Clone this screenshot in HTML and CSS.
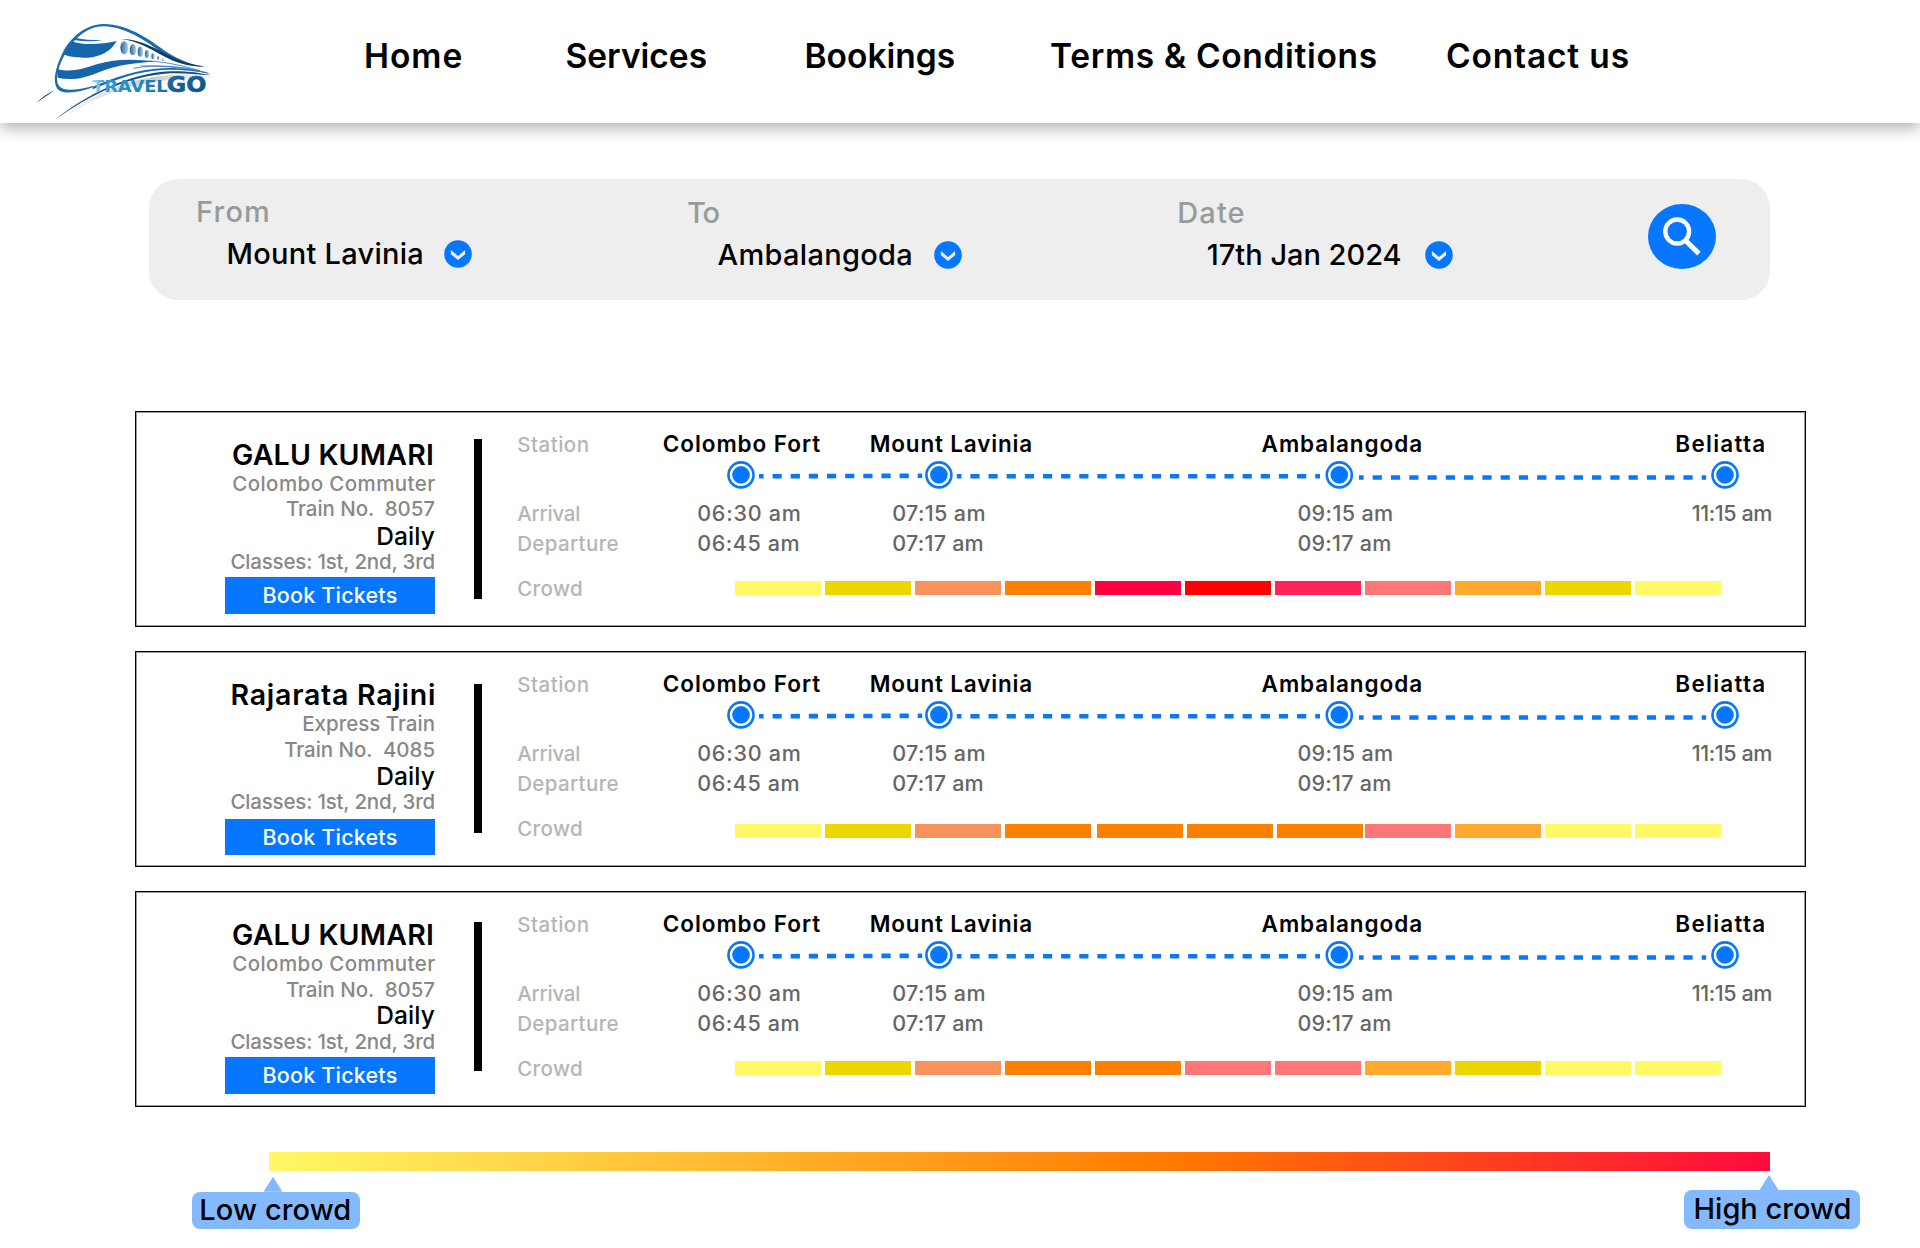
FILE: index.html
```html
<!DOCTYPE html>
<html lang="en">
<head>
<meta charset="utf-8">
<title>TravelGO – Train search</title>
<link rel="stylesheet" href="styles.css">
</head>
<body>
<svg width="0" height="0" class="defs">
  <defs>
    <symbol id="chevron" viewBox="0 0 28 28">
      <circle cx="14" cy="14" r="13.8" fill="#0877ff"/>
      <path d="M6.9 10 14 16 21.1 10V14.300L14 20 6.900 14.300Z" fill="#eee"/>
    </symbol>
    <symbol id="track" viewBox="0 0 1070 32">
      <g fill="none" stroke="#0877ff" stroke-width="4.6" stroke-dasharray="9.2 8.95" stroke-dashoffset="4.6">
        <path d="M59 17.3 222.2 16.8"/>
        <path d="M256.8 17.2H620"/>
        <path d="M659 18.5H1006.2" stroke-dasharray="9.2 9.08"/>
      </g>
      <g fill="#fff" stroke="#0877ff" stroke-width="2.6">
        <circle cx="41" cy="15.9" r="12.5"/><circle cx="238.9" cy="15.9" r="12.5"/><circle cx="639.3" cy="15.9" r="12.5"/><circle cx="1025" cy="15.9" r="12.5"/>
      </g>
      <g fill="#0877ff">
        <circle cx="41" cy="15.9" r="8.8"/><circle cx="238.9" cy="15.9" r="8.8"/><circle cx="639.3" cy="15.9" r="8.8"/><circle cx="1025" cy="15.9" r="8.8"/>
      </g>
    </symbol>
  </defs>
</svg>

<header class="header">
  <svg class="logo" viewBox="0 0 630 330">
    <defs>
      <linearGradient id="word"><stop offset="0" stop-color="#a9dcf5"/><stop offset=".2" stop-color="#2b9bd8"/><stop offset="1" stop-color="#1a6fab"/></linearGradient>
      <linearGradient id="go" x1="0" y1="0" x2="1" y2="1"><stop offset="0" stop-color="#1d6fa8"/><stop offset="1" stop-color="#0f4f7f"/></linearGradient>
      <linearGradient id="win"><stop offset="0" stop-color="#1e62a0"/><stop offset="1" stop-color="#b5d3ea"/></linearGradient>
      <linearGradient id="haze"><stop offset="0" stop-color="#ddd" stop-opacity=".4"/><stop offset=".6" stop-color="#ccc"/><stop offset="1" stop-color="#ddd" stop-opacity=".3"/></linearGradient>
    </defs>
    <path fill="url(#haze)" d="M130 324C220 245 330 206 440 196C500 190 560 196 582 202C520 206 470 206 400 216C300 232 210 270 130 324Z"/>
    <path fill="#1a6cb0" d="M219 232C180 247 128 256 112 236C97 214 106 172 128 128C152 82 196 43 250 42C330 42 400 98 440 126C480 152 520 166 556 170C510 170 470 156 430 131C390 104 325 50 250 49C204 49 166 82 140 124C118 160 102 208 118 229C132 246 176 240 219 228Z"/>
    <path fill="#1565ab" d="M158 95C200 108 250 101 290 93C275 121 245 141 202 143C170 144 145 140 131 133C138 118 146 105 158 95Z"/>
    <path fill="#1a6cb0" d="M168 84C190 89 215 90 246 91C220 96 185 94 162 90Z"/>
    <path fill="#1565ab" d="M112 177C150 188 185 178 230 163C290 145 350 148 408 155C350 157 290 165 240 185C190 207 150 212 113 203Z"/>
    <g fill="url(#win)"><ellipse cx="313" cy="113" rx="12" ry="19"/><ellipse cx="339" cy="119" rx="10" ry="17"/><ellipse cx="361" cy="125" rx="8" ry="15"/><ellipse cx="381" cy="132" rx="6.5" ry="12"/><ellipse cx="399" cy="139" rx="5" ry="9"/><ellipse cx="415" cy="144" rx="3.5" ry="6"/><ellipse cx="429" cy="149" rx="2" ry="4"/></g>
    <path fill="#0e3f68" d="M302 87C350 86 395 108 440 133C480 153 515 166 556 169C515 172 470 160 430 138C385 113 350 92 302 87Z"/>
    <path fill="#1a6cb0" d="M218 230C280 205 350 176 440 174C500 174 540 182 575 192C530 184 480 178 430 180C350 184 290 208 218 238Z"/>
    <g fill="none" stroke="#2b78b8" stroke-width="2.5"><path d="M340 175C400 163 480 166 560 188"/><path d="M362 168C440 166 510 176 565 190"/><path d="M390 153C440 156 490 168 540 182"/></g>
    <path fill="#0f4f7f" d="M106 329C200 252 330 190 450 184C500 183 540 188 572 196C530 193 490 188 450 190C330 197 210 254 106 329Z"/>
    <path fill="#0f4f7f" d="M48 279C66 262 84 250 104 240C86 254 68 266 48 279Z"/>
    <text class="logo-word" x="216" y="247" font-size="46" textLength="227" lengthAdjust="spacingAndGlyphs" fill="url(#word)">TRAVEL</text>
    <text class="logo-word" x="440" y="247" font-size="66" textLength="119" lengthAdjust="spacingAndGlyphs" fill="url(#go)" stroke="#12588c" stroke-width="2">GO</text>
  </svg>
  <nav class="nav">
    <a class="nav-home">Home</a><a>Services</a><a>Bookings</a><a class="nav-terms">Terms &amp; Conditions</a><a class="nav-contact">Contact us</a>
  </nav>
</header>

<main>
  <section class="search">
    <div class="field">
      <div class="field-label label-from">From</div>
      <div class="field-value"><span class="value-from">Mount Lavinia</span><svg class="chevron"><use href="#chevron"/></svg></div>
    </div>
    <div class="field field-to">
      <div class="field-label label-to">To</div>
      <div class="field-value"><span class="value-to">Ambalangoda</span><svg class="chevron"><use href="#chevron"/></svg></div>
    </div>
    <div class="field field-date">
      <div class="field-label label-date">Date</div>
      <div class="field-value"><span class="value-date">17th Jan 2024</span><svg class="chevron"><use href="#chevron"/></svg></div>
    </div>
    <svg class="search-button" viewBox="0 0 68 65">
      <ellipse cx="34" cy="32.5" rx="34" ry="32.5" fill="#0877ff"/>
      <ellipse cx="29.2" cy="27.5" rx="11.9" ry="12" fill="none" stroke="#fff" stroke-width="4.4"/>
      <path d="M37.3 36.3 50.9 49.6" stroke="#fff" stroke-width="5"/>
    </svg>
  </section>

  <article class="card">
    <div class="info">
      <h2 class="name-galu">GALU KUMARI</h2>
      <p class="commuter">Colombo Commuter</p>
      <p class="number">Train No.  8057</p>
      <p class="days">Daily</p>
      <p class="classes">Classes: 1st, 2nd, 3rd</p>
      <a class="book">Book Tickets</a>
    </div>
    <div class="rule"></div>
    <div class="schedule">
      <div class="row stations"><span class="head head-station">Station</span><b>Colombo Fort</b><b class="lavinia">Mount Lavinia</b><b>Ambalangoda</b><b class="beliatta">Beliatta</b></div>
      <svg class="track"><use href="#track"/></svg>
      <div class="row times"><span class="head head-arrival">Arrival</span><span class="t0">06:30 am</span><span>07:15 am</span><span>09:15 am</span><span class="t3">11:15 am</span></div>
      <div class="row times"><span class="head">Departure</span><span class="t0b">06:45 am</span><span class="t1b">07:17 am</span><span class="t1b">09:17 am</span></div>
      <div class="crowd"><span class="head">Crowd</span><div class="segments"><i class="lemon"></i><i class="mustard"></i><i class="peach"></i><i class="orange"></i><i class="crimson"></i><i class="red"></i><i class="rose"></i><i class="salmon"></i><i class="amber"></i><i class="mustard"></i><i class="lemon"></i></div></div>
    </div>
  </article>

  <article class="card card-second">
    <div class="info">
      <h2 class="name-rajini">Rajarata Rajini</h2>
      <p class="express">Express Train</p>
      <p class="number lowered">Train No.  4085</p>
      <p class="days">Daily</p>
      <p class="classes">Classes: 1st, 2nd, 3rd</p>
      <a class="book">Book Tickets</a>
    </div>
    <div class="rule"></div>
    <div class="schedule">
      <div class="row stations"><span class="head head-station">Station</span><b>Colombo Fort</b><b class="lavinia">Mount Lavinia</b><b>Ambalangoda</b><b class="beliatta">Beliatta</b></div>
      <svg class="track"><use href="#track"/></svg>
      <div class="row times"><span class="head head-arrival">Arrival</span><span class="t0">06:30 am</span><span>07:15 am</span><span>09:15 am</span><span class="t3">11:15 am</span></div>
      <div class="row times"><span class="head">Departure</span><span class="t0b">06:45 am</span><span class="t1b">07:17 am</span><span class="t1b">09:17 am</span></div>
      <div class="crowd"><span class="head">Crowd</span><div class="segments"><i class="lemon"></i><i class="mustard"></i><i class="peach"></i><i class="orange"></i><i class="orange nudged"></i><i class="orange nudged"></i><i class="orange nudged"></i><i class="salmon"></i><i class="amber"></i><i class="lemon"></i><i class="lemon"></i></div></div>
    </div>
  </article>

  <article class="card card-third">
    <div class="info">
      <h2 class="name-galu">GALU KUMARI</h2>
      <p class="commuter">Colombo Commuter</p>
      <p class="number lowered">Train No.  8057</p>
      <p class="days raised">Daily</p>
      <p class="classes">Classes: 1st, 2nd, 3rd</p>
      <a class="book">Book Tickets</a>
    </div>
    <div class="rule"></div>
    <div class="schedule">
      <div class="row stations"><span class="head head-station">Station</span><b>Colombo Fort</b><b class="lavinia">Mount Lavinia</b><b>Ambalangoda</b><b class="beliatta">Beliatta</b></div>
      <svg class="track"><use href="#track"/></svg>
      <div class="row times"><span class="head head-arrival">Arrival</span><span class="t0">06:30 am</span><span>07:15 am</span><span>09:15 am</span><span class="t3">11:15 am</span></div>
      <div class="row times"><span class="head">Departure</span><span class="t0b">06:45 am</span><span class="t1b">07:17 am</span><span class="t1b">09:17 am</span></div>
      <div class="crowd"><span class="head">Crowd</span><div class="segments"><i class="lemon"></i><i class="mustard"></i><i class="peach"></i><i class="orange"></i><i class="orange"></i><i class="salmon"></i><i class="salmon"></i><i class="amber"></i><i class="mustard"></i><i class="lemon"></i><i class="lemon"></i></div></div>
    </div>
  </article>

  <div class="scale"></div>
  <div class="callouts">
    <div class="callout low">Low crowd</div>
    <div class="callout high">High crowd</div>
  </div>
</main>
</body>
</html>
```
FILE: styles.css
```css
* { box-sizing: border-box; }
body { margin: 0; background: #fff; color: #000; font-family: Inter, "Open Sans", sans-serif; height: 1248px; overflow: hidden; }
.defs { display: block; }
h2, p { margin: 0; }

/* Header */
.header { display: flex; align-items: flex-start; height: 123px; padding: 10px 0 0 20px; background: #fff; box-shadow: 0 5px 15px rgba(0, 0, 0, .31); }
.logo { width: 210px; height: 110px; }
.logo-word { font-family: "DejaVu Sans", sans-serif; font-weight: 700; }
.nav { display: grid; grid-template-columns: 201.5px 239px 245.5px 396px auto; margin: 26.3px 0 0 134px; font-size: 33.5px; font-weight: 600; line-height: 40px; white-space: nowrap; }
.nav-home { letter-spacing: .99px; }
.nav-terms { letter-spacing: .67px; }
.nav-contact { letter-spacing: .84px; }

/* Search bar */
.search { display: grid; grid-template-columns: 491px 490.3px 470.9px 68px; width: 1621px; height: 121.2px; margin: 55.5px 0 0 149px; padding-left: 47px; border-radius: 29px; background: #eee; font-size: 29px; line-height: 42px; white-space: nowrap; }
.field { padding-top: 12px; }
.field-to, .field-date { padding-top: 13.8px; }
.field-label { color: #969c9b; font-weight: 450; }
.label-from { letter-spacing: 1.2px; }
.label-to { letter-spacing: -1.25px; }
.label-date { letter-spacing: 1.1px; }
.field-value { display: flex; align-items: center; height: 42px; padding-left: 30.5px; font-weight: 500; }
.field-value span { width: 217px; }
.field-to .field-value span { width: 216px; }
.field-date .field-value { padding-left: 29.5px; }
.field-date .field-value span { width: 217.8px; }
.value-from { letter-spacing: .26px; }
.value-to { letter-spacing: .32px; }
.value-date { letter-spacing: -.02px; }
.chevron { width: 28px; height: 28px; }
.search-button { width: 68px; height: 65px; margin-top: 25.5px; }

/* Train cards */
.card { display: flex; width: 1671px; height: 216px; margin: 0 0 24px 135px; border: 1px solid #000; box-shadow: inset 0 0 0 1px #999; }
.search + .card { margin-top: 111.3px; }
.info { display: flex; flex-direction: column; width: 299px; padding-top: 24px; color: #888; font-size: 20.5px; font-weight: 450; text-align: right; white-space: nowrap; }
.info h2 { color: #000; font-size: 28.5px; font-weight: 600; line-height: 37px; }
.name-galu { margin-right: 1px; letter-spacing: .18px; }
.name-rajini { margin-right: -1.2px; letter-spacing: .75px; }
.commuter, .express { line-height: 22px; }
.commuter { margin-right: -.6px; letter-spacing: .42px; }
.express { letter-spacing: 0; }
.number { margin: 1px 0; line-height: 26px; letter-spacing: -.06px; white-space: pre; }
.days { color: #000; font-size: 24.5px; font-weight: 500; line-height: 26px; letter-spacing: .1px; }
.classes { line-height: 26px; letter-spacing: -.2px; }
.lowered { margin: 2.3px 0 -.3px; }
.raised { margin: -1.2px 0 1.2px; }
.book { width: 210px; height: 36.3px; margin: 2.3px 0 0 89px; background: #0877ff; color: #fff; font-size: 21.5px; font-weight: 500; line-height: 36.3px; letter-spacing: .2px; text-align: center; }
.card-second .book { margin-top: 4.1px; }
.rule { width: 7.5px; height: 159.7px; margin: 27.3px 0 0 39px; background: #000; }
.card-second .rule { height: 148.7px; margin-top: 32px; }
.card-third .rule { height: 148.7px; margin-top: 30.3px; }

/* Schedule */
.schedule { display: flex; flex-direction: column; margin-left: 35.7px; padding-top: 17.8px; font-weight: 450; white-space: nowrap; }
.row { display: grid; }
.head { color: #b5b5b5; font-size: 20.5px; letter-spacing: .36px; }
.head-station { letter-spacing: .5px; }
.head-arrival { letter-spacing: -.22px; }
.stations { grid-template-columns: 145.6px 207px 391.8px 413.7px auto; height: 30.4px; line-height: 30.4px; }
.stations b { margin-top: -1px; font-size: 22.5px; font-weight: 600; letter-spacing: .94px; }
.stations .lavinia { letter-spacing: .82px; }
.stations .beliatta { letter-spacing: 1.28px; }
.track { width: 1070px; height: 32px; margin: -.8px 0 7.4px 182.5px; }
.times { grid-template-columns: 180px 195px 405.2px 394.3px auto; height: 30px; line-height: 30px; }
.times span:not(.head) { margin-top: -1px; color: #666; font-size: 21.5px; letter-spacing: .36px; }
.times .t0:not(.head) { letter-spacing: .76px; }
.times .t0b:not(.head) { letter-spacing: .58px; }
.times .t1b:not(.head) { letter-spacing: .25px; }
.times .t3:not(.head) { letter-spacing: -.42px; }
.crowd { display: grid; grid-template-columns: 218px auto; height: 60.6px; line-height: 60.6px; }
.segments { display: flex; gap: 4px; height: 14px; margin-top: 22.3px; }
.card-second .segments { margin-top: 25.3px; }
.segments i { width: 86px; }
.segments .nudged { margin: 0 -1.5px 0 1.5px; }
.lemon { background: #fff965; }
.mustard { background: #edd500; }
.peach { background: #f8935c; }
.orange { background: #ff7f00; }
.crimson { background: #ff0040; }
.red { background: #f00; }
.rose { background: #ff2458; }
.salmon { background: #ff7676; }
.amber { background: #ffaa2e; }

/* Crowd scale */
.scale { width: 1501.5px; height: 19.5px; margin: 45px 0 0 268.5px; background: linear-gradient(90deg, #fff965, #ff7a00 60%, #ff0a3c); }
.callouts { display: flex; justify-content: space-between; margin: 18.5px 60px 0 192px; font-size: 29px; font-weight: 500; }
.callout { position: relative; height: 37.5px; border-radius: 8px; background: #82b9ff; line-height: 38.5px; }
.callout::before { content: ""; position: absolute; bottom: 100%; width: 19px; height: 15px; background: #82b9ff; clip-path: polygon(50% 0, 100% 100%, 0 100%); }
.low { width: 168px; margin-top: 1.7px; padding-left: 7.3px; letter-spacing: .1px; line-height: 35.5px; }
.low::before { left: 71.5px; }
.high { width: 176px; height: 38.7px; padding-left: 9.5px; }
.high::before { left: 75.5px; }
```
